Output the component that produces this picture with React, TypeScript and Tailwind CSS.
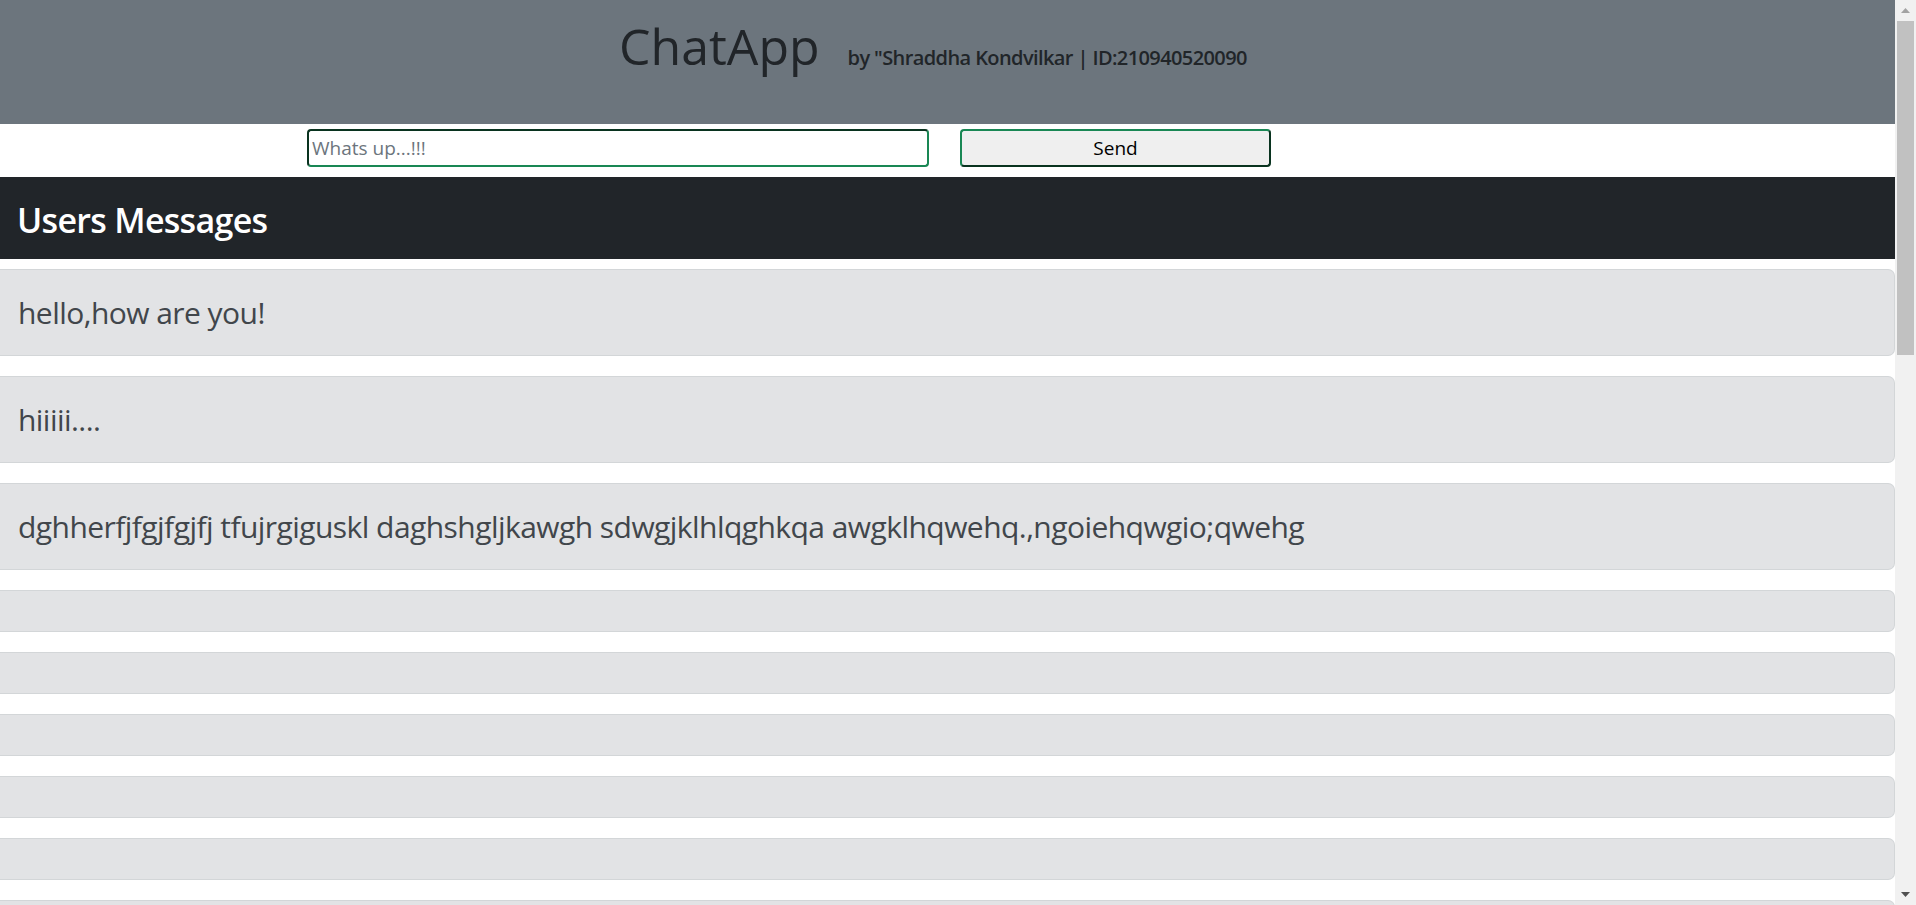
import React from 'react';

const messages = [
  'hello,how are you!',
  'hiiiii....',
  'dghherfjfgjfgjfj tfujrgiguskl daghshgljkawgh sdwgjklhlqghkqa awgklhqwehq.,ngoiehqwgio;qwehg',
];

const emptyCount = 27;

// the window's scroll bar, as it shows in the screenshot
const ScrollBar: React.FC = () => (
  <div className="flex h-full w-[21px] shrink-0 flex-col bg-[#f1f1f1]">
    <div className="flex h-[21px] items-center justify-center">
      <svg width="9" height="5" viewBox="0 0 9 5">
        <path d="M4.5 0 L9 5 L0 5 Z" fill="#a3a3a3" />
      </svg>
    </div>
    <div className="mx-[2px] h-[334px] bg-[#c1c1c1]" />
    <div className="flex-1" />
    <div className="flex h-[21px] items-center justify-center">
      <svg width="9" height="5" viewBox="0 0 9 5">
        <path d="M0 0 L9 0 L4.5 5 Z" fill="#505050" />
      </svg>
    </div>
  </div>
);

const App: React.FC = () => {
  return (
    <div className="flex h-screen overflow-hidden bg-white font-['Open_Sans',sans-serif] text-[#212529]">
      <main className="min-w-0 flex-1">
        <header className="flex h-[124px] items-baseline bg-[#6c757d] pl-[619px] pt-4">
          <h1 className="text-[50px] leading-[60px] font-normal">ChatApp</h1>
          <span className="ml-[28px] text-[20px] font-semibold tracking-[-0.6px]">
            by "Shraddha Kondvilkar | ID:210940520090
          </span>
        </header>

        <form className="flex h-[53px] items-start gap-[31px] pl-[307px] pt-[5px]" onSubmit={(e) => e.preventDefault()}>
          <input
            type="text"
            placeholder="Whats up...!!!"
            className="h-[38px] w-[622px] rounded-[4px] border-2 border-[#198754] [border-style:inset] bg-white px-[3px] text-[19px] text-black outline-none placeholder:text-[#6c757d]"
          />
          <button
            type="submit"
            className="h-[38px] w-[311px] rounded-[4px] border-2 border-[#198754] [border-style:outset] bg-[#efefef] text-[19px] text-black"
          >
            Send
          </button>
        </form>

        <div className="flex h-[82px] items-center bg-[#212529] px-[17px] pt-[5px]">
          <h3 className="text-[34px] font-semibold tracking-[-0.7px] text-white">Users Messages</h3>
        </div>

        <div className="pt-[10px]">
          {messages.map((m, i) => (
            <div
              key={i}
              className="mb-[20px] rounded-r-[7px] border border-l-0 border-[#d3d6d8] bg-[#e2e3e5] px-[18px] py-[20px] text-[30px] leading-[45px] tracking-[-0.55px] text-[#41464b]"
            >
              {m}
            </div>
          ))}
          {Array.from({ length: emptyCount }).map((_, i) => (
            <div
              key={`e${i}`}
              className="mb-[20px] h-[42px] rounded-r-[7px] border border-l-0 border-[#d3d6d8] bg-[#e2e3e5]"
            />
          ))}
        </div>
      </main>
      <ScrollBar />
    </div>
  );
};

export default App;
